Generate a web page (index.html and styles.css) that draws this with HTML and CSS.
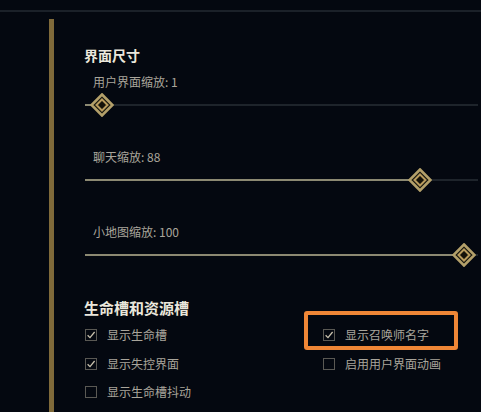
FILE: index.html
```html
<!DOCTYPE html>
<html lang="zh-CN">
<head>
<meta charset="utf-8">
<title>界面设置</title>
<link rel="stylesheet" href="styles.css">
</head>
<body>
<div class="topline"></div>
<div class="main">
  <div class="rail"></div>
  <div class="content">
    <h2 class="heading">界面尺寸</h2>
    <div class="slider">
      <div class="label">用户界面缩放: 1</div>
      <div class="track">
        <div class="fill" style="width:17px"></div>
        <div class="thumb"><svg viewBox="0 0 24 24" width="24" height="24"><polygon points="12,1.5 22.5,12 12,22.5 1.5,12" class="outer"/><polygon points="12,6.5 17.5,12 12,17.5 6.5,12" class="inner"/></svg></div>
        <div class="rest"></div>
      </div>
    </div>
    <div class="slider">
      <div class="label">聊天缩放: 88</div>
      <div class="track">
        <div class="fill" style="width:335px"></div>
        <div class="thumb"><svg viewBox="0 0 24 24" width="24" height="24"><polygon points="12,1.5 22.5,12 12,22.5 1.5,12" class="outer"/><polygon points="12,6.5 17.5,12 12,17.5 6.5,12" class="inner"/></svg></div>
        <div class="rest"></div>
      </div>
    </div>
    <div class="slider">
      <div class="label">小地图缩放: 100</div>
      <div class="track">
        <div class="fill" style="width:379px"></div>
        <div class="thumb"><svg viewBox="0 0 24 24" width="24" height="24"><polygon points="12,1.5 22.5,12 12,22.5 1.5,12" class="outer"/><polygon points="12,6.5 17.5,12 12,17.5 6.5,12" class="inner"/></svg></div>
        <div class="rest"></div>
      </div>
    </div>

    <h2 class="heading heading2">生命槽和资源槽</h2>
    <div class="checks">
      <div class="check"><span class="box on"><svg viewBox="0 0 12 12" width="12" height="12"><path d="M2.6 6.2 L5 8.6 L9.6 3"/></svg></span><span class="text">显示生命槽</span></div>
      <div class="check highlighted"><span class="box on"><svg viewBox="0 0 12 12" width="12" height="12"><path d="M2.6 6.2 L5 8.6 L9.6 3"/></svg></span><span class="text">显示召唤师名字</span><span class="mark"></span></div>
      <div class="check"><span class="box on"><svg viewBox="0 0 12 12" width="12" height="12"><path d="M2.6 6.2 L5 8.6 L9.6 3"/></svg></span><span class="text">显示失控界面</span></div>
      <div class="check"><span class="box"></span><span class="text">启用用户界面动画</span></div>
      <div class="check"><span class="box"></span><span class="text">显示生命槽抖动</span></div>
    </div>
  </div>
</div>
</body>
</html>
```

FILE: styles.css
```css
html, body {
  margin: 0;
  padding: 0;
  background: #040810;
  overflow: hidden;
}
body {
  width: 481px;
  height: 412px;
  font-family: "Noto Sans CJK SC", "Noto Sans", sans-serif;
}
.topline {
  margin-top: 10px;
  height: 2px;
  background: #1b2129;
}
.main {
  display: flex;
  height: 400px;
  padding-top: 7px;
  box-sizing: border-box;
}
.rail {
  width: 5px;
  margin-left: 49px;
  background: #7f6a3a;
  flex: none;
}
.content {
  flex: 1;
  margin-left: 30px;
  margin-right: 3px;
  padding-top: 26px;
}
.heading {
  margin: 0;
  font-size: 14px;
  line-height: 20px;
  font-weight: 700;
  color: #ebe7dc;
}
.heading2 {
  font-size: 15px;
  margin-top: 32px;
}
.slider {
  margin-top: 9px;
}
.slider + .slider {
  margin-top: 33px;
}
.label {
  padding-left: 9px;
  font-size: 12px;
  line-height: 16px;
  color: #a9a59b;
}
.track {
  margin-top: 4px;
  margin-left: 1px;
  height: 22px;
  display: flex;
  align-items: center;
}
.fill {
  height: 2px;
  background: #8c8972;
  flex: none;
}
.rest {
  flex: 1;
  height: 2px;
  background: #1e242b;
}
.thumb {
  width: 24px;
  height: 24px;
  margin: 0 -12px;
  flex: none;
  position: relative;
  z-index: 1;
}
.thumb svg {
  display: block;
}
.thumb .outer {
  fill: #17160f;
  stroke: #b3a06a;
  stroke-width: 2.6;
  stroke-linejoin: miter;
}
.thumb .inner {
  fill: #141209;
  stroke: #b89b5c;
  stroke-width: 2;
}
.checks {
  margin-top: 3px;
  display: grid;
  grid-template-columns: 238px 1fr;
  grid-auto-rows: 28.5px;
}
.check {
  display: flex;
  align-items: center;
  padding-left: 1px;
  position: relative;
}
.box {
  width: 12px;
  height: 12px;
  box-sizing: border-box;
  border: 1px solid #5a5954;
  flex: none;
  display: flex;
  align-items: center;
  justify-content: center;
}
.box svg {
  display: block;
  margin: -1px;
}
.box path {
  fill: none;
  stroke: #c9c2ae;
  stroke-width: 1.3;
}
.text {
  margin-left: 10px;
  font-size: 12px;
  line-height: 16px;
  color: #a9a59b;
}
.mark {
  position: absolute;
  left: -18px;
  top: -10px;
  width: 154px;
  height: 39px;
  box-sizing: border-box;
  border: 4px solid #ef8636;
  border-radius: 3px;
}
```
